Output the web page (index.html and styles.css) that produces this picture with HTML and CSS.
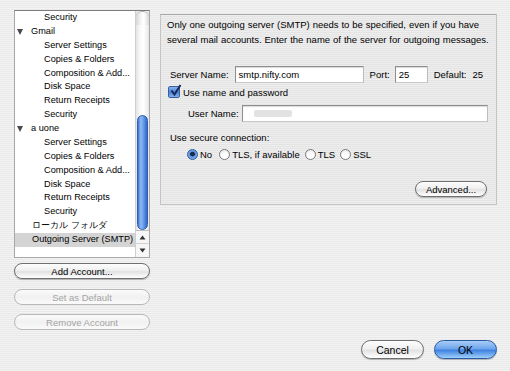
FILE: index.html
```html
<!DOCTYPE html>
<html>
<head>
<meta charset="utf-8">
<link rel="stylesheet" href="styles.css">
</head>
<body>
<div class="window">
  <div class="left">
    <div class="list">
      <div class="rows">
        <div class="row child">Security</div>
        <div class="row acct"><span class="tri"></span>Gmail</div>
        <div class="row child">Server Settings</div>
        <div class="row child">Copies &amp; Folders</div>
        <div class="row child">Composition &amp; Add...</div>
        <div class="row child">Disk Space</div>
        <div class="row child">Return Receipts</div>
        <div class="row child">Security</div>
        <div class="row acct"><span class="tri"></span>a uone</div>
        <div class="row child">Server Settings</div>
        <div class="row child">Copies &amp; Folders</div>
        <div class="row child">Composition &amp; Add...</div>
        <div class="row child">Disk Space</div>
        <div class="row child">Return Receipts</div>
        <div class="row child">Security</div>
        <div class="row acct">ローカル フォルダ</div>
        <div class="row acct selected">Outgoing Server (SMTP)</div>
      </div>
      <div class="scrollbar">
        <div class="cap"></div>
        <div class="track"><div class="thumb"></div></div>
        <div class="arrows">
          <div class="arrow"><svg width="7" height="5" viewBox="0 0 7 5"><path d="M3.5 0.5 L6.5 4.5 L0.5 4.5 Z" fill="#333"/></svg></div>
          <div class="arrow"><svg width="7" height="5" viewBox="0 0 7 5"><path d="M0.5 0.5 L6.5 0.5 L3.5 4.5 Z" fill="#333"/></svg></div>
        </div>
      </div>
    </div>
    <div class="btn wide first">Add Account...</div>
    <div class="btn wide disabled">Set as Default</div>
    <div class="btn wide disabled last">Remove Account</div>
  </div>
  <div class="right">
    <div class="panel">
      <p class="intro">Only one outgoing server (SMTP) needs to be specified, even if you have several mail accounts. Enter the name of the server for outgoing messages.</p>
      <div class="frow r-server">
        <span class="lbl">Server Name:</span>
        <span class="input server">smtp.nifty.com</span>
        <span class="lbl port">Port:</span>
        <span class="input portin">25</span>
        <span class="lbl def">Default:</span>
        <span class="lbl">25</span>
      </div>
      <div class="frow r-check">
        <span class="check"><svg width="13" height="13" viewBox="0 0 13 13"><path d="M2.5 6.5 L5.5 10.5 L11.5 1" fill="none" stroke="#1b2a5a" stroke-width="2"/></svg></span>
        <span class="lbl">Use name and password</span>
      </div>
      <div class="frow r-user">
        <span class="lbl">User Name:</span>
        <span class="input user"><span class="blur"></span></span>
      </div>
      <div class="frow r-secure"><span class="lbl">Use secure connection:</span></div>
      <div class="frow r-radios">
        <span class="radio on"></span><span class="lbl">No</span>
        <span class="radio"></span><span class="lbl">TLS, if available</span>
        <span class="radio"></span><span class="lbl">TLS</span>
        <span class="radio"></span><span class="lbl">SSL</span>
      </div>
      <div class="frow r-adv"><div class="btn adv">Advanced...</div></div>
    </div>
    <div class="bottom">
      <div class="btn cancel">Cancel</div>
      <div class="btn ok">OK</div>
    </div>
  </div>
</div>
</body>
</html>
```

FILE: styles.css
```css
html, body {
  margin: 0;
  padding: 0;
}
body {
  width: 510px;
  height: 371px;
  overflow: hidden;
  font-family: "Liberation Sans", Arial, sans-serif;
  font-size: 9.5px;
  color: #000;
  background: repeating-linear-gradient(to bottom, #f3f3f3 0, #f3f3f3 1px, #e9e9e9 1px, #e9e9e9 2px);
}
.window {
  display: flex;
  gap: 10px;
  padding: 10px 0 0 14px;
}
.left {
  width: 136px;
  display: flex;
  flex-direction: column;
}
.list {
  height: 246px;
  display: flex;
  background: #fff;
  border: 1px solid #a8a8a8;
  border-top-color: #7c7c7c;
}
.rows {
  flex: 1;
  overflow: hidden;
  font-size: 9.2px;
}
.row {
  height: 13.875px;
  line-height: 13.875px;
  white-space: nowrap;
  overflow: hidden;
  display: flex;
  align-items: center;
}
.child { padding-left: 29px; }
.acct { padding-left: 17px; }
.tri {
  width: 0;
  height: 0;
  border-left: 3.5px solid transparent;
  border-right: 3.5px solid transparent;
  border-top: 6px solid #4a4a4a;
  margin-left: -15px;
  margin-right: 8px;
}
.selected { background: #d4d4d4; }
.scrollbar {
  width: 13px;
  display: flex;
  flex-direction: column;
  border-left: 1px solid #cfcfcf;
  background: linear-gradient(to right, #e4e4e4, #fbfbfb 35%, #fff 60%, #e6e6e6);
}
.cap {
  height: 13px;
  border-radius: 6px 6px 0 0;
  border-top: 1px solid #b0b0b0;
  background: linear-gradient(to right, #d6d6d6, #f8f8f8 40%, #fff 60%, #d9d9d9);
}
.track {
  flex: 1;
  padding-top: 90px;
}
.thumb {
  height: 115px;
  margin: 0 1px;
  border-radius: 6px;
  border: 1px solid #2c5fb0;
  background: linear-gradient(to right, #3a74d4, #8fb8f3 30%, #6fa3ec 55%, #2f67c8);
  box-sizing: border-box;
}
.arrows {
  height: 27px;
  border-top: 1px solid #bfbfbf;
  display: flex;
  flex-direction: column;
  background: #f6f6f6;
}
.arrow {
  flex: 1;
  display: flex;
  align-items: center;
  justify-content: center;
}
.arrow + .arrow { border-top: 1px solid #d0d0d0; }
.btn {
  box-sizing: border-box;
  height: 16px;
  border-radius: 8px;
  border: 1px solid #6f6f6f;
  background: linear-gradient(to bottom, #fdfdfd, #f0f0f0 45%, #e2e2e2 55%, #fff);
  box-shadow: 0 1px 1px rgba(0,0,0,0.25);
  display: flex;
  align-items: center;
  justify-content: center;
  white-space: nowrap;
}
.wide { margin-top: 10px; }
.wide.first { margin-top: 5px; }
.wide.last { margin-top: 9px; }
.disabled {
  color: #a4a4a4;
  border-color: #b8b8b8;
  box-shadow: none;
  background: linear-gradient(to bottom, #fbfbfb, #f1f1f1 50%, #fafafa);
}
.right {
  width: 337px;
  padding-top: 4px;
  display: flex;
  flex-direction: column;
}
.panel {
  height: 191px;
  box-sizing: border-box;
  border: 1px solid #c4c4c4;
  border-top-color: #a9a9a9;
  padding: 2px 6px 0 6px;
  background: repeating-linear-gradient(to bottom, #eeeeee 0, #eeeeee 1px, #e4e4e4 1px, #e4e4e4 2px);
}
.intro {
  margin: 0;
  line-height: 15px;
  word-spacing: 0.3px;
}
.frow {
  display: flex;
  align-items: center;
  white-space: nowrap;
}
.r-server { margin-top: 19px; height: 17px; padding-left: 3px; }
.input {
  box-sizing: border-box;
  height: 17px;
  background: #fff;
  border: 1px solid #8e8e8e;
  border-right-color: #bdbdbd;
  border-bottom-color: #c8c8c8;
  box-shadow: inset 0 1px 1px rgba(0,0,0,0.15);
  padding: 0 3px;
  display: flex;
  align-items: center;
}
.server { width: 129px; margin-left: 6px; }
.port { margin-left: 6px; }
.portin { width: 33px; margin-left: 5px; }
.def { margin-left: 6px; margin-right: 6px; }
.r-check { margin-top: 2px; height: 14px; padding-left: 1px; }
.check {
  width: 12px;
  height: 12px;
  box-sizing: border-box;
  border: 1px solid #365f9c;
  border-radius: 2px;
  background: linear-gradient(to bottom, #8ab3ec, #4a82d8 50%, #7fb0f0);
  margin-right: 3px;
  position: relative;
}
.check svg { position: absolute; left: 0; top: -3px; }
.r-user { margin-top: 6px; height: 17px; padding-left: 21px; }
.user { width: 246px; margin-left: 3px; }
.blur {
  width: 38px;
  height: 7px;
  background: #e2e2e2;
  margin-left: 8px;
  border-radius: 2px;
}
.r-secure { margin-top: 8px; height: 14px; padding-left: 3px; }
.radio {
  width: 11px;
  height: 11px;
  box-sizing: border-box;
  border-radius: 50%;
  border: 1px solid #7a7a7a;
  background: radial-gradient(circle at 50% 70%, #fff 40%, #dedede 100%);
  margin-right: 2px;
  position: relative;
}
.radio.on {
  border-color: #2d5a9e;
  background: radial-gradient(circle at 50% 45%, #1c2b4a 0 2.2px, #5a8fdc 2.6px, #9cc2f5 100%);
}
.r-radios { margin-top: 3px; height: 14px; padding-left: 20px; }
.r-radios .lbl { margin-right: 5px; }
.r-radios .lbl:nth-of-type(2) { margin-right: 7px; }
.r-adv { justify-content: flex-end; margin-top: 20px; padding-right: 3px; }
.adv { width: 72px; }
.bottom {
  margin-top: 135px;
  display: flex;
  justify-content: flex-end;
  gap: 10px;
}
.cancel, .ok {
  height: 19px;
  border-radius: 10px;
  width: 63px;
  font-size: 10.5px;
}
.ok {
  border-color: #2b5aa5;
  background: linear-gradient(to bottom, #a9cdf7, #6ea6ec 45%, #3f82e0 55%, #9ed0fb);
}
```
